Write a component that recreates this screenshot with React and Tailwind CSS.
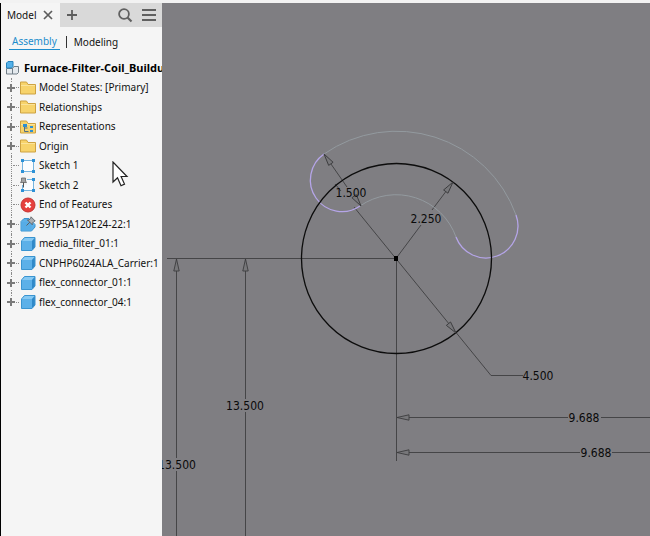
import React from 'react';

const treeItems = [
  { label: 'Model States: [Primary]', icon: 'folder', expandable: true },
  { label: 'Relationships', icon: 'folder', expandable: true },
  { label: 'Representations', icon: 'views', expandable: true },
  { label: 'Origin', icon: 'folder', expandable: true },
  { label: 'Sketch 1', icon: 'sketch' },
  { label: 'Sketch 2', icon: 'pinnedSketch' },
  { label: 'End of Features', icon: 'end' },
  { label: '59TP5A120E24-22:1', icon: 'pinnedPart', expandable: true },
  { label: 'media_filter_01:1', icon: 'part', expandable: true },
  { label: 'CNPHP6024ALA_Carrier:1', icon: 'part', expandable: true },
  { label: 'flex_connector_01:1', icon: 'part', expandable: true },
  { label: 'flex_connector_04:1', icon: 'part', expandable: true },
];

function Folder() {
  return (
    <>
      <path d="M.5 14V2h6l1.500 2.500h7.500V14z" fill="#f7d36b" stroke="#cda243" />
      <path d="M1 5.500h14" stroke="#fbe39a" />
    </>
  );
}

function Sketch() {
  return (
    <>
      <path d="M2.500 2.500h11v11h-11z" fill="#fbfdff" stroke="#76b5e0" />
      <path d="M1 1h3v3h-3zM12 1h3v3h-3zM1 12h3v3h-3zM12 12h3v3h-3z" fill="#2d91d6" />
    </>
  );
}

function Part() {
  return (
    <>
      <path d="M1.500 5 4.500 1.500h10.500v9.500l-3 3.500H1.500z" fill="#5cb0e8" stroke="#3a94d0" strokeLinejoin="round" />
      <path d="M2 5l3-3h9.500L12 5z" fill="#86c9f3" />
      <path d="M12 5l2.800-3v9L12 14z" fill="#3089c8" />
    </>
  );
}

function TreeIcon({ name }) {
  return (
    <svg viewBox="0 0 16 16" className="size-4 shrink-0" aria-hidden="true">
      {(name === 'folder' || name === 'views') && <Folder />}
      {name === 'views' && (
        <>
          <path d="M4.500 6v6.500h4M4.500 9h3" fill="none" stroke="#4f6f86" />
          <path d="M3 5h4v3H3zM10 7h3v2h-3zM10 11h3v2h-3z" fill="#2d8fd2" />
        </>
      )}
      {(name === 'sketch' || name === 'pinnedSketch') && <Sketch />}
      {name === 'pinnedSketch' && (
        <>
          <path d="M0 0h7v8H0z" fill="#f5f5f5" />
          <path d="M1.500 1h4v3l1 1.500h-6l1-1.500z" fill="#a4a4a4" stroke="#666" strokeWidth=".8" />
          <path d="M3.500 5.500v5" stroke="#555" />
        </>
      )}
      {name === 'end' && (
        <>
          <circle cx="8" cy="8" r="7" fill="#e5403d" stroke="#c63331" />
          <path d="M5.500 5.500l5 5m0-5l-5 5" stroke="#fff" strokeWidth="2.400" />
        </>
      )}
      {name === 'part' && <Part />}
      {name === 'pinnedPart' && (
        <>
          <path d="M1 5.500 4 2.500h5l6 6v2.500l-3.500 4H1z" fill="#5cb0e8" stroke="#3a94d0" strokeLinejoin="round" />
          <path d="M1.500 6h7l3 3v5.500h-10z" fill="#56ace6" />
          <path d="M6.500 9.500l3.500-3.500" stroke="#5a5e62" />
          <path d="M11 .8l4.200 4.200-1.400.6-1.600 1.800.1 1.400-4.900-4.900 1.500.2 1.700-1.800z" fill="#a9adb1" stroke="#55595d" strokeWidth=".8" />
        </>
      )}
    </svg>
  );
}

function TreeItem({ item, last }) {
  return (
    <li className="flex items-center">
      <span className="relative flex h-full w-[19px] shrink-0 items-center">
        <span className={last ? 'absolute left-[10px] top-0 h-1/2 border-l border-dotted border-[#8c8c8c]' : 'absolute left-[10px] top-0 h-full border-l border-dotted border-[#8c8c8c]'} />
        <span className="absolute left-3 w-1.5 border-t border-dotted border-[#8c8c8c]" />
        {item.expandable && (
          <button type="button" aria-label={`Expand ${item.label}`} className="relative ml-1.5 flex h-3 w-2 items-center justify-center bg-[#f5f5f5]">
            <svg viewBox="0 0 8 8" className="size-2 shrink-0" aria-hidden="true">
              <path d="M4 0v8M0 4h8" stroke="#7a7a7a" strokeWidth="2" />
            </svg>
          </button>
        )}
      </span>
      <TreeIcon name={item.icon} />
      <span className="ml-[3px] whitespace-nowrap">{item.label}</span>
    </li>
  );
}

function ModelBrowser() {
  return (
    <aside className="relative w-[162px] shrink-0 overflow-hidden border-l border-black bg-[#f5f5f5] text-[10px] text-[#111]">
      <header className="flex h-6 bg-[#d9d9d9]">
        <div className="flex w-[59px] items-center justify-between bg-[#f5f5f5] pl-1.5 pr-[7px]">
          <span>Model</span>
          <button type="button" aria-label="Close tab">
            <svg viewBox="0 0 10 10" className="size-[10px]" aria-hidden="true">
              <path d="M1 1l8 8M9 1L1 9" stroke="#5d5d5d" strokeWidth="1.700" />
            </svg>
          </button>
        </div>
        <button type="button" aria-label="Add tab" className="ml-1.5">
          <svg viewBox="0 0 12 12" className="size-3" aria-hidden="true">
            <path d="M6 1v10M1 6h10" stroke="#5d5d5d" strokeWidth="1.800" />
          </svg>
        </button>
        <div className="ml-auto mr-[5px] flex items-center gap-2">
          <button type="button" aria-label="Search">
            <svg viewBox="0 0 16 16" className="size-4" aria-hidden="true">
              <circle cx="7" cy="7" r="4.900" fill="none" stroke="#606060" strokeWidth="1.800" />
              <path d="M10.500 10.500l4 4" stroke="#606060" strokeWidth="2.200" />
            </svg>
          </button>
          <button type="button" aria-label="Menu">
            <svg viewBox="0 0 16 16" className="size-4" aria-hidden="true">
              <path d="M1 3h14M1 8h14M1 13h14" stroke="#606060" strokeWidth="2" />
            </svg>
          </button>
        </div>
      </header>

      <nav className="mt-[7px] flex h-4 items-center pl-2">
        <a href="#assembly" className="flex h-full items-center border-b border-[#1c8ccc] px-[3px] text-[#1c8ccc]">Assembly</a>
        <span className="ml-1.5 h-3 border-l border-[#333]" />
        <a href="#modeling" className="ml-[7px]">Modeling</a>
      </nav>

      <h1 className="mt-2 flex h-5 items-center gap-[5px] whitespace-nowrap pl-1 text-[11px] font-bold text-black">
        <svg viewBox="0 0 14 14" className="size-3.5 shrink-0" aria-hidden="true">
          <path d="M1.500 7.500h6v5.500h-6zM7.500 7.500l1.500-2h4.500v6l-1.500 1.500H7.500z" fill="#e4e9ed" stroke="#717d86" />
          <path d="M1.500 2l1.500-1.500h5v5l-1.500 1.500h-5z" fill="#55b1e9" stroke="#2483bd" />
        </svg>
        Furnace-Filter-Coil_Buildup
      </h1>

      <ul className="grid h-[234px] grid-rows-12">
        {treeItems.map((item, i) => (
          <TreeItem key={item.label} item={item} last={i === treeItems.length - 1} />
        ))}
      </ul>

      {/* mouse pointer */}
      <svg viewBox="0 0 17 26" className="absolute left-[111px] top-[158px] h-[26px] w-[17px]" aria-hidden="true">
        <path d="M1 1v20l4.500-4.300 3.500 8 3.500-1.600-3.400-7.600H15z" fill="#fff" stroke="#222" strokeWidth="1.200" />
      </svg>
    </aside>
  );
}

// arrow head with its tip at x, y; angle 0 points right
function Arrow({ x, y, angle }) {
  return <path d="M0 0l-12-2.700v5.400z" transform={`translate(${x} ${y}) rotate(${angle})`} fill="#77777a" stroke="#3c3c3e" strokeWidth=".9" />;
}

function SketchCanvas() {
  return (
    <main className="min-w-0 flex-1 bg-[#7f7e82]">
      <svg viewBox="162 3 488 533" preserveAspectRatio="xMinYMin slice" className="h-full w-full" role="img" aria-label="Sketch with dimensions">
        <g fill="none" stroke="#454547" strokeWidth="1">
          <path d="M167 258.500H396M396.500 258V461" />
          <path d="M176.500 259V458M176.500 471V536M245.500 259V399M245.500 412V536" />
          <path d="M397 417.500H568M601 417.500H650M397 452.500H580M612 452.500H650" />
          <path d="M335 184l6 7M354 207L491 375.500H523" />
          <path d="M396 258.500L421 225M432 210L453 182" />
          <path d="M324 154L347 187M354 198L361 206" />
        </g>
        <g fill="none" strokeWidth="1">
          <path d="M324 154A127 127 0 0 1 516 215" stroke="#939a9f" />
          <path d="M360 206A63.500 63.500 0 0 1 456 237" stroke="#939a9f" />
          {/* radius grows to half the chord, so both ends are true half circles */}
          <path d="M324 154A31 31 0 0 0 360 206" stroke="#b5a5e8" strokeWidth="1.300" />
          <path d="M516 215A31 31 0 0 1 456 237" stroke="#b5a5e8" strokeWidth="1.300" />
        </g>
        <circle cx="396.500" cy="258.500" r="95" fill="none" stroke="#0c0c0c" strokeWidth="1.300" />
        <path d="M394 256h4v5h-4z" fill="#000" />

        <Arrow x={176.5} y={259} angle={-90} />
        <Arrow x={245.5} y={259} angle={-90} />
        <Arrow x={397} y={417.5} angle={180} />
        <Arrow x={397} y={452.5} angle={180} />
        <Arrow x={453} y={182} angle={-53} />
        <Arrow x={456} y={333} angle={51} />
        <Arrow x={324} y={154} angle={-125} />
        <Arrow x={361} y={206} angle={55} />

        <g className="font-['DejaVu_Sans_Condensed','DejaVu_Sans',sans-serif] text-[12px] [font-stretch:condensed]" fill="#0a0a0a" textAnchor="middle">
          <text x="351" y="197">1.500</text>
          <text x="426" y="223">2.250</text>
          <text x="538" y="380">4.500</text>
          <text x="584" y="422">9.688</text>
          <text x="596" y="457">9.688</text>
          <text x="245" y="410">13.500</text>
          <text x="177" y="469">13.500</text>
        </g>
      </svg>
    </main>
  );
}

export default function App() {
  return (
    <div className="flex h-screen overflow-hidden bg-[#f2f2f2] pt-[3px] font-['Noto_Sans','Open_Sans',sans-serif]">
      <ModelBrowser />
      <SketchCanvas />
    </div>
  );
}
